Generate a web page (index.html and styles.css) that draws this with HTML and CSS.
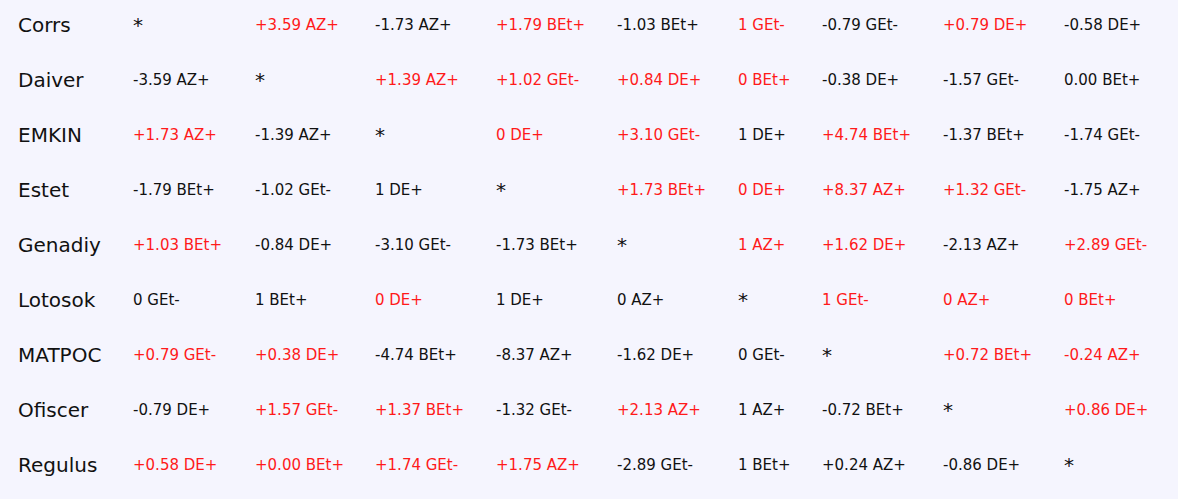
FILE: index.html
```html
<!DOCTYPE html>
<html>
<head>
<meta charset="utf-8">
<link rel="stylesheet" href="styles.css">
</head>
<body>
<table class="grid">
  <colgroup>
    <col class="c-name"><col class="c-w122"><col class="c-w120"><col class="c-w121"><col class="c-w121"><col class="c-w121"><col class="c-w84"><col class="c-w121"><col class="c-w121"><col class="c-last">
  </colgroup>
  <tbody>
    <tr><th>Corrs</th><td class="self">*</td><td class="up">+3.59 AZ+</td><td>-1.73 AZ+</td><td class="up">+1.79 BEt+</td><td>-1.03 BEt+</td><td class="up">1 GEt-</td><td>-0.79 GEt-</td><td class="up">+0.79 DE+</td><td>-0.58 DE+</td></tr>
    <tr><th>Daiver</th><td>-3.59 AZ+</td><td class="self">*</td><td class="up">+1.39 AZ+</td><td class="up">+1.02 GEt-</td><td class="up">+0.84 DE+</td><td class="up">0 BEt+</td><td>-0.38 DE+</td><td>-1.57 GEt-</td><td>0.00 BEt+</td></tr>
    <tr><th>EMKIN</th><td class="up">+1.73 AZ+</td><td>-1.39 AZ+</td><td class="self">*</td><td class="up">0 DE+</td><td class="up">+3.10 GEt-</td><td>1 DE+</td><td class="up">+4.74 BEt+</td><td>-1.37 BEt+</td><td>-1.74 GEt-</td></tr>
    <tr><th>Estet</th><td>-1.79 BEt+</td><td>-1.02 GEt-</td><td>1 DE+</td><td class="self">*</td><td class="up">+1.73 BEt+</td><td class="up">0 DE+</td><td class="up">+8.37 AZ+</td><td class="up">+1.32 GEt-</td><td>-1.75 AZ+</td></tr>
    <tr><th>Genadiy</th><td class="up">+1.03 BEt+</td><td>-0.84 DE+</td><td>-3.10 GEt-</td><td>-1.73 BEt+</td><td class="self">*</td><td class="up">1 AZ+</td><td class="up">+1.62 DE+</td><td>-2.13 AZ+</td><td class="up">+2.89 GEt-</td></tr>
    <tr><th>Lotosok</th><td>0 GEt-</td><td>1 BEt+</td><td class="up">0 DE+</td><td>1 DE+</td><td>0 AZ+</td><td class="self">*</td><td class="up">1 GEt-</td><td class="up">0 AZ+</td><td class="up">0 BEt+</td></tr>
    <tr><th>MATPOC</th><td class="up">+0.79 GEt-</td><td class="up">+0.38 DE+</td><td>-4.74 BEt+</td><td>-8.37 AZ+</td><td>-1.62 DE+</td><td>0 GEt-</td><td class="self">*</td><td class="up">+0.72 BEt+</td><td class="up">-0.24 AZ+</td></tr>
    <tr><th>Ofiscer</th><td>-0.79 DE+</td><td class="up">+1.57 GEt-</td><td class="up">+1.37 BEt+</td><td>-1.32 GEt-</td><td class="up">+2.13 AZ+</td><td>1 AZ+</td><td>-0.72 BEt+</td><td class="self">*</td><td class="up">+0.86 DE+</td></tr>
    <tr><th>Regulus</th><td class="up">+0.58 DE+</td><td class="up">+0.00 BEt+</td><td class="up">+1.74 GEt-</td><td class="up">+1.75 AZ+</td><td>-2.89 GEt-</td><td>1 BEt+</td><td>+0.24 AZ+</td><td>-0.86 DE+</td><td class="self">*</td></tr>
  </tbody>
</table>
</body>
</html>
```

FILE: styles.css
```css
html, body {
  margin: 0;
  padding: 0;
  background: #f5f5fe;
}
body {
  font-family: "DejaVu Sans", Verdana, sans-serif;
  color: #111;
}
.grid {
  border-collapse: collapse;
  table-layout: fixed;
  width: 1178px;
}
.c-name { width: 133px; }
.c-w122 { width: 122px; }
.c-w120 { width: 120px; }
.c-w121 { width: 121px; }
.c-w84 { width: 84px; }
.c-last { width: 114px; }
.grid tr {
  height: 55px;
}
.grid th,
.grid td {
  padding: 15px 0 0 0;
  vertical-align: top;
  text-align: left;
  white-space: nowrap;
  line-height: 20px;
  font-weight: normal;
}
.grid th {
  padding-left: 18px;
  font-size: 20px;
}
.grid td {
  font-size: 15px;
}
.grid td.self {
  font-size: 20px;
}
.grid td.up {
  color: #ff1a1a;
}
```
